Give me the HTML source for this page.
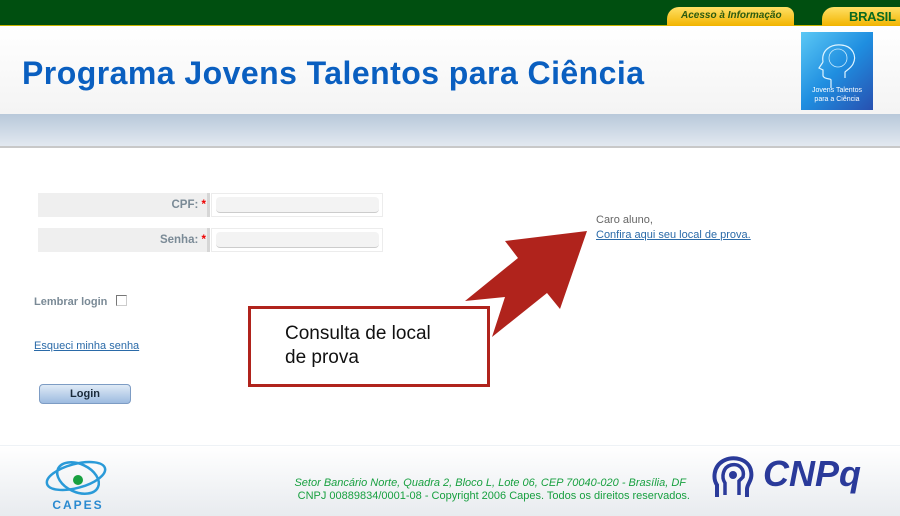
<!DOCTYPE html>
<html><head><meta charset="utf-8"><style>
*{margin:0;padding:0;box-sizing:border-box}
body{width:900px;height:516px;overflow:hidden;background:#fff;font-family:"Liberation Sans",Arial,sans-serif;position:relative}
.abs{position:absolute}
</style></head><body>
<div class="abs" style="left:0;top:0;width:900px;height:26px;background:#004f10;border-bottom:1px solid #c8b400"></div>
<div class="abs" style="left:667px;top:7px;width:127px;height:19px;background:linear-gradient(#ffe066,#f2b400);border-radius:12px 8px 0 0"></div>
<div class="abs" style="left:681px;top:10px;font-size:10px;font-style:italic;font-weight:bold;color:#2a5a10">Acesso à Informação</div>
<div class="abs" style="left:822px;top:7px;width:90px;height:19px;background:linear-gradient(#ffe066,#f2b400);border-radius:12px 0 0 0"></div>
<div class="abs" style="left:849px;top:9px;font-size:13px;font-weight:900;color:#0a6a20;letter-spacing:-0.3px">BRASIL</div>
<div class="abs" style="left:0;top:27px;width:900px;height:87px;background:linear-gradient(#fff,#f4f4f4)"></div>
<div class="abs" style="left:22px;top:55px;font-size:32px;font-weight:bold;color:#0a5fc0;letter-spacing:0.45px">Programa Jovens Talentos para Ciência</div>
<div class="abs" style="left:801px;top:32px;width:72px;height:78px;background:linear-gradient(135deg,#5bc8f5,#1f8ee0 50%,#2850b0)">
<svg width="72" height="78" viewBox="0 0 72 78"><path d="M22 30 C20 18 30 12 40 13 C52 14 56 24 52 32 C50 36 46 38 44 40 L44 46 M22 30 L18 36 L22 38 L22 44 C24 48 30 46 30 48 L30 56" fill="none" stroke="#dff4ff" stroke-width="1.2"/><circle cx="37" cy="26" r="9" fill="none" stroke="#cfeeff" stroke-width="0.8"/></svg>
<div class="abs" style="left:0;top:54px;width:72px;text-align:center;font-size:7px;color:#fff;line-height:9px">Jovens Talentos<br>para a Ciência</div></div>
<div class="abs" style="left:0;top:114px;width:900px;height:34px;background:linear-gradient(#b8c8da,#e2e8f0);border-bottom:2px solid #c8c8c8"></div>

<div class="abs" style="left:38px;top:193px;width:172px;height:24px;background:#efefef;border-right:3px solid #d6d6d6"></div>
<div class="abs" style="left:38px;top:199px;width:168px;text-align:right;font-size:11.5px;font-weight:bold;color:#7a8a96">CPF: <span style="color:#e00">*</span></div>
<div class="abs" style="left:211px;top:193px;width:172px;height:24px;border:1px solid #ececec"></div>
<div class="abs" style="left:216px;top:197px;width:163px;height:16px;background:#f3f3f3;border-radius:4px;border-bottom:1px solid #ccc"></div>
<div class="abs" style="left:38px;top:228px;width:172px;height:24px;background:#efefef;border-right:3px solid #d6d6d6"></div>
<div class="abs" style="left:38px;top:234px;width:168px;text-align:right;font-size:11.5px;font-weight:bold;color:#7a8a96">Senha: <span style="color:#e00">*</span></div>
<div class="abs" style="left:211px;top:228px;width:172px;height:24px;border:1px solid #ececec"></div>
<div class="abs" style="left:216px;top:232px;width:163px;height:16px;background:#f3f3f3;border-radius:4px;border-bottom:1px solid #ccc"></div>

<div class="abs" style="left:34px;top:296px;font-size:11px;font-weight:bold;color:#7a8a96">Lembrar login</div>
<div class="abs" style="left:116px;top:295px;width:11px;height:11px;border:1px solid #777;border-right-color:#ccc;border-bottom-color:#ccc"></div>
<div class="abs" style="left:34px;top:340px;font-size:11px;color:#2a6aa8;text-decoration:underline">Esqueci minha senha</div>
<div class="abs" style="left:39px;top:384px;width:92px;height:20px;border-radius:4px;background:linear-gradient(#dfeaf6,#9dbbe0);border:1px solid #7d9cc4;text-align:center;font-size:11px;font-weight:bold;line-height:18px;color:#1a2a3a">Login</div>

<div class="abs" style="left:596px;top:214px;font-size:11px;color:#666">Caro aluno,</div>
<div class="abs" style="left:596px;top:229px;font-size:11px;color:#2a6aa8;text-decoration:underline">Confira aqui seu local de prova.</div>

<div class="abs" style="left:248px;top:306px;width:242px;height:81px;border:3px solid #b0231c;background:#fff"></div>
<svg class="abs" style="left:0;top:0" width="900" height="516"><polygon points="587,231 505,241 518,258 465,301 505,297 492,337 547,293 560,309" fill="#b0231c"/></svg>
<div class="abs" style="left:285px;top:322px;font-size:19px;line-height:24px;color:#111">Consulta de local<br>de prova</div>

<div class="abs" style="left:0;top:445px;width:900px;height:71px;background:linear-gradient(#fff,#e8ebef);border-top:1px solid #eef2f6"></div>
<svg class="abs" style="left:40px;top:454px" width="76" height="60" viewBox="0 0 76 60"><ellipse cx="36" cy="22" rx="30" ry="12" fill="none" stroke="#2a9ad8" stroke-width="2.5" transform="rotate(-15 36 22)"/><ellipse cx="38" cy="24" rx="22" ry="14" fill="none" stroke="#2a9ad8" stroke-width="2.5" transform="rotate(25 38 24)"/><circle cx="38" cy="26" r="5" fill="#18a040"/><text x="38" y="55" text-anchor="middle" font-family="Liberation Sans" font-weight="bold" font-size="12" letter-spacing="2" fill="#2a8ad0">CAPES</text></svg>
<div class="abs" style="left:150px;top:477px;width:536px;text-align:right;font-size:11px;font-style:italic;color:#18a040">Setor Bancário Norte, Quadra 2, Bloco L, Lote 06, CEP 70040-020 - Brasília, DF</div>
<div class="abs" style="left:150px;top:490px;width:540px;text-align:right;font-size:11px;color:#18a040">CNPJ 00889834/0001-08 - Copyright 2006 Capes. Todos os direitos reservados.</div>
<svg class="abs" style="left:712px;top:455px" width="48" height="44" viewBox="0 0 48 44"><path d="M5 42 L5 30 C1 24 1 12 11 6 C21 0 37 4 39 16 C41 25 35 29 35 34 L35 42" fill="none" stroke="#2a3a9a" stroke-width="4"/><path d="M13 40 L13 28 C9 22 11 12 19 10 C27 8 33 14 31 22 L27 26 L27 40" fill="none" stroke="#2a3a9a" stroke-width="3.5"/><circle cx="21" cy="20" r="4" fill="#2a3a9a"/></svg>
<div class="abs" style="left:763px;top:453px;font-size:36px;font-weight:bold;font-style:italic;color:#2a3a9a">CNPq</div>
</body></html>
